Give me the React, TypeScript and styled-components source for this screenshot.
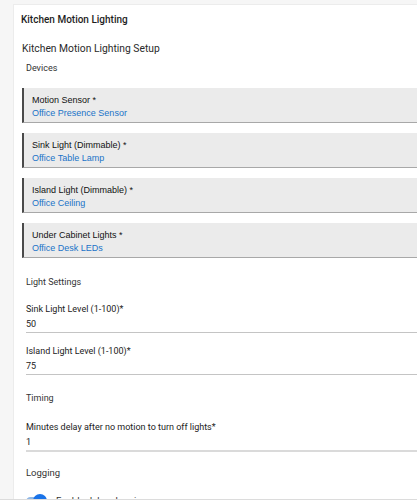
import React from "react";
import styled, { createGlobalStyle } from "styled-components";

const Global = createGlobalStyle`
  html, body { margin: 0; padding: 0; background: #f6f6f6; }
  body { font-family: Roboto, "Liberation Sans", Arial, sans-serif; color: #222; }
  #root { height: 500px; overflow: hidden; }
`;

const Page = styled.div`
  padding: 4px 0 0 13px;
  height: 500px;
  overflow: hidden;
  box-sizing: border-box;
  border-bottom: 1px solid #dcdcdc;
`;

const Card = styled.div`
  background: #fff;
  border-left: 1px solid #ececec;
  border-top: 1px solid #ececec;
  min-height: 600px;
  display: flex;
  flex-direction: column;
`;

const Title = styled.div`
  font-size: 10px;
  font-weight: 500;
  line-height: 14px;
  padding: 8px 0 0 7px;
  color: #1e1e1e;
`;

const Body = styled.div`
  padding: 14px 0 0 8px;
  display: flex;
  flex-direction: column;
`;

const SetupHeading = styled.div`
  font-size: 10.3px;
  line-height: 16px;
  color: #2a2a2a;
`;

const SectionLabel = styled.div<{ $mt: number; $size?: number }>`
  font-size: ${(p) => p.$size ?? 9}px;
  line-height: 14px;
  margin-top: ${(p) => p.$mt}px;
  padding-left: 4px;
  color: #333;
`;

const DeviceList = styled.div`
  display: flex;
  flex-direction: column;
  gap: 10px;
  margin-top: 13px;
`;

const DeviceCard = styled.div`
  background: #ebebeb;
  border-left: 2px solid #4a4a4a;
  border-bottom: 1px solid #a8a8a8;
  height: 35px;
  box-sizing: border-box;
  padding: 6px 0 0 8px;
  font-family: "Liberation Sans", Arial, sans-serif;
  font-size: 9px;
  line-height: 12.5px;
`;

const DeviceName = styled.div`
  color: #111;
`;

const DeviceLink = styled.div`
  color: #1a73c8;
`;

const Field = styled.div<{ $mt: number; $thick?: boolean }>`
  margin-top: ${(p) => p.$mt}px;
  margin-left: 4px;
  border-bottom: ${(p) => (p.$thick ? "2px solid #dadada" : "1px solid #c4c4c4")};
  font-size: 9px;
  color: #222;
`;

const FieldLabel = styled.div`
  line-height: 16px;
`;

const FieldValue = styled.div`
  line-height: 15px;
`;

const ToggleRow = styled.div`
  display: flex;
  align-items: center;
  gap: 10px;
  margin-top: 14px;
  padding-left: 4px;
  font-size: 9.5px;
  line-height: 14px;
  color: #333;
`;

const Track = styled.div`
  position: relative;
  width: 20px;
  height: 9px;
  border-radius: 5px;
  background: #8fb7e6;
  flex: none;
`;

const Knob = styled.div`
  position: absolute;
  right: -1px;
  top: -3px;
  width: 14px;
  height: 14px;
  border-radius: 50%;
  background: #1a73e8;
`;

const devices = [
  { name: "Motion Sensor *", link: "Office Presence Sensor" },
  { name: "Sink Light (Dimmable) *", link: "Office Table Lamp" },
  { name: "Island Light (Dimmable) *", link: "Office Ceiling" },
  { name: "Under Cabinet Lights *", link: "Office Desk LEDs" },
];

export default function App() {
  return (
    <>
      <Global />
      <Page>
        <Card>
          <Title>Kitchen Motion Lighting</Title>
          <Body>
            <SetupHeading>Kitchen Motion Lighting Setup</SetupHeading>
            <SectionLabel $mt={4}>Devices</SectionLabel>
            <DeviceList>
              {devices.map((d) => (
                <DeviceCard key={d.name}>
                  <DeviceName>{d.name}</DeviceName>
                  <DeviceLink>{d.link}</DeviceLink>
                </DeviceCard>
              ))}
            </DeviceList>
            <SectionLabel $mt={17}>Light Settings</SectionLabel>
            <Field $mt={12}>
              <FieldLabel>Sink Light Level (1-100)*</FieldLabel>
              <FieldValue>50</FieldValue>
            </Field>
            <Field $mt={10}>
              <FieldLabel>Island Light Level (1-100)*</FieldLabel>
              <FieldValue>75</FieldValue>
            </Field>
            <SectionLabel $mt={16}>Timing</SectionLabel>
            <Field $mt={14} $thick>
              <FieldLabel>Minutes delay after no motion to turn off lights*</FieldLabel>
              <FieldValue>1</FieldValue>
            </Field>
            <SectionLabel $mt={14} $size={9.5}>Logging</SectionLabel>
            <ToggleRow>
              <Track>
                <Knob />
              </Track>
              Enable debug logging
            </ToggleRow>
          </Body>
        </Card>
      </Page>
    </>
  );
}
